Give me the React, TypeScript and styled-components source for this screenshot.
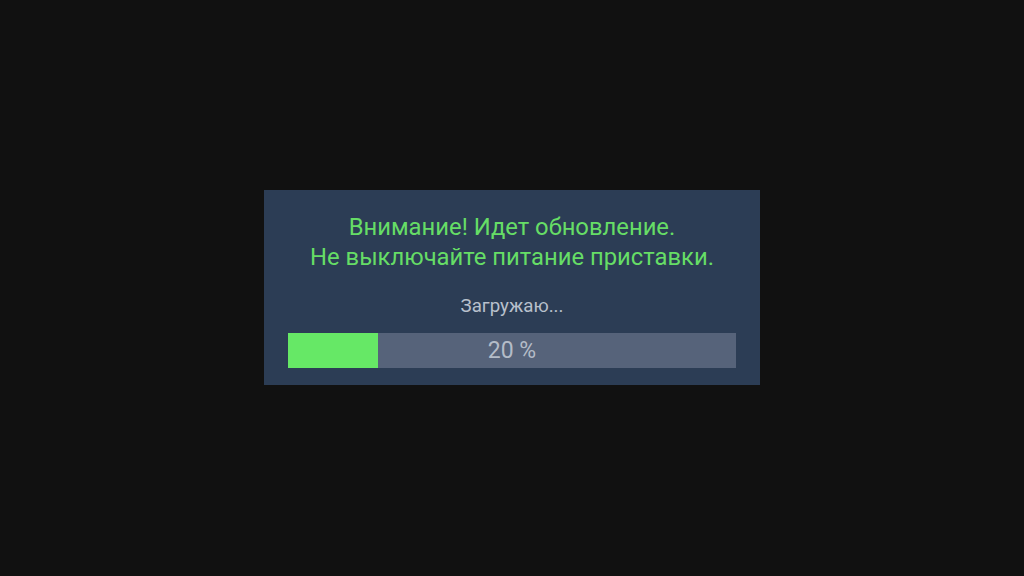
import React from "react";
import styled, { createGlobalStyle } from "styled-components";

const GlobalStyle = createGlobalStyle`
    html, body {
        margin: 0;
        padding: 0;
        background: #111111;
        font-family: Roboto, "Noto Sans", "Liberation Sans", sans-serif;
    }
`;

const progress = 20; // процент загрузки

const App = () => {
    return (
        <>
            <GlobalStyle />
            <Screen>
                <UpdateDialog>
                    <Warning>
                        Внимание! Идет обновление.
                        <br />
                        Не выключайте питание приставки.
                    </Warning>
                    <Status>Загружаю...</Status>
                    <ProgressTrack>
                        <ProgressFill style={{ width: `${progress}%` }} />
                        <ProgressLabel>{progress} %</ProgressLabel>
                    </ProgressTrack>
                </UpdateDialog>
            </Screen>
        </>
    );
};

export default App;

const Screen = styled.main`
    width: 1024px;
    height: 576px;
    display: flex;
    align-items: center;
    justify-content: center;
`;

const UpdateDialog = styled.section`
    width: 496px;
    box-sizing: border-box;
    padding: 22px 24px 17px;
    margin-top: -1px;
    background: #2c3d55;
    display: flex;
    flex-direction: column;
    align-items: center;
`;

const Warning = styled.p`
    margin: 0;
    font-size: 23.8px;
    line-height: 30px;
    color: #66dd66;
    text-align: center;
`;

const Status = styled.p`
    margin: 23px 0 16px;
    font-size: 18.7px;
    line-height: 22px;
    color: #b8c0cc;
`;

const ProgressTrack = styled.div`
    position: relative;
    width: 100%;
    height: 35px;
    background: #56637a;
    display: flex;
    align-items: center;
    justify-content: center;
`;

const ProgressFill = styled.div`
    position: absolute;
    left: 0;
    top: 0;
    bottom: 0;
    background: #66e866;
`;

const ProgressLabel = styled.span`
    position: relative;
    font-size: 23px;
    color: #b4bcc8;
`;
